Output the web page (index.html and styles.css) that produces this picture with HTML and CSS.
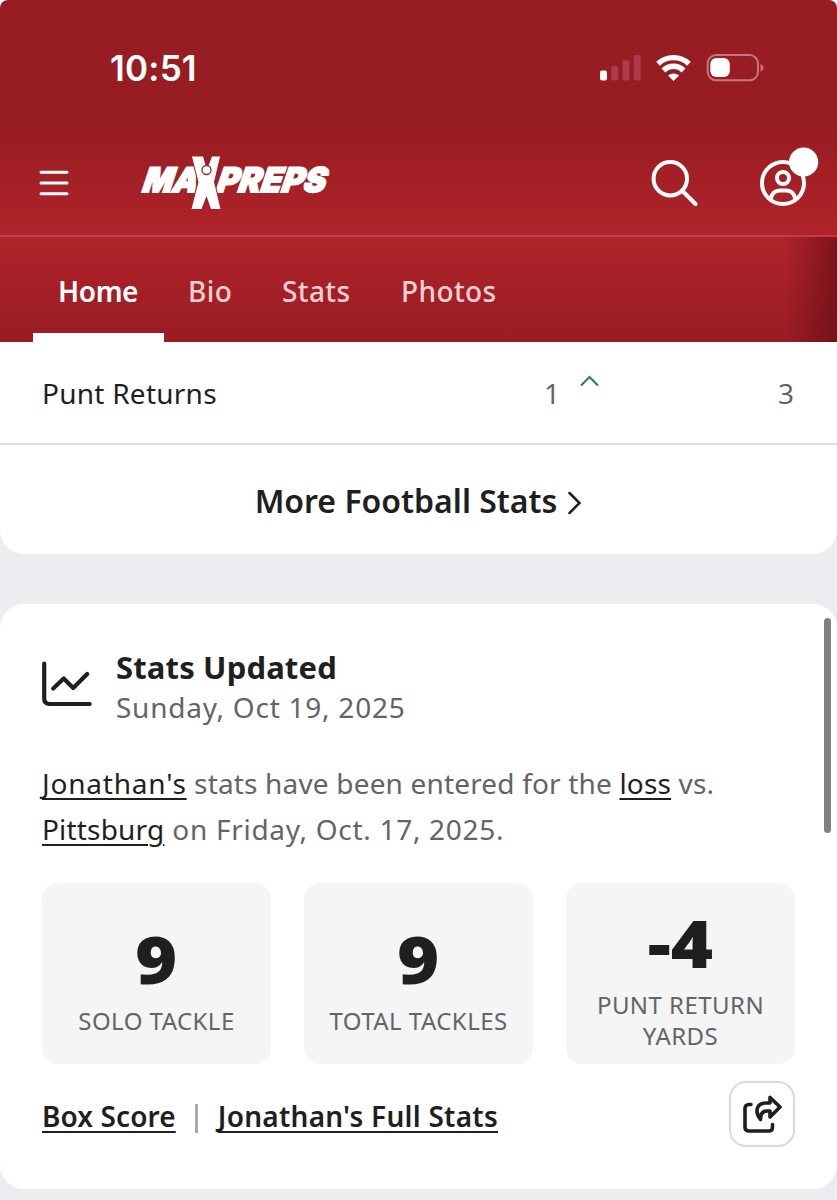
FILE: index.html
```html
<!DOCTYPE html>
<html lang="en">
<head>
    <meta charset="UTF-8">
    <meta name="viewport" content="width=device-width, initial-scale=1.0">
    <title>MaxPreps</title>
    <link rel="stylesheet" href="styles.css">
</head>
<body>
    <header class="top">
        <div class="status-bar">
            <span class="time">10:51</span>
            <svg class="status-icons" width="166" height="30" viewBox="0 0 166 30">
                <!-- signal -->
                <g fill="#fff">
                    <rect x="0" y="17.500" width="7" height="10" rx="2"/>
                    <g fill="#ad3b4c">
                        <rect x="11.300" y="13" width="7" height="14.500" rx="2"/>
                        <rect x="22.500" y="7.300" width="7" height="20.200" rx="2"/>
                        <rect x="33.700" y="2" width="7" height="25.500" rx="2"/>
                    </g>
                </g>
                <!-- wifi -->
                <g fill="none" stroke="#fff" stroke-width="5.400">
                    <path d="M58 10.800a22.500 22.500 0 0 1 31 0"/>
                    <path d="M63.500 17.500a14 14 0 0 1 20 0"/>
                </g>
                <path d="M68 22.500a8.200 8.200 0 0 1 11 0l-5.500 5.500z" fill="#fff"/>
                <!-- battery -->
                <rect x="107.700" y="2" width="50.300" height="25.300" rx="8.500" fill="none" stroke="#cb737d" stroke-width="2"/>
                <rect x="110.300" y="5" width="19.500" height="19" rx="6" fill="#fff"/>
                <path d="M160.500 10.800q3 1.500 3 4t-3 4z" fill="#cb737d"/>
            </svg>
        </div>
        <div class="brand-bar">
            <button class="icon-btn menu" aria-label="Menu">
                <svg width="30" height="26" viewBox="0 0 30 26" stroke="#fff" stroke-width="3" stroke-linecap="round">
                    <path d="M2 2.200h26M2 13h26M2 23.800h26"/>
                </svg>
            </button>
            <svg class="logo" width="200" height="56" viewBox="0 0 200 56" aria-label="MaxPreps">
                <g class="logo-text" transform="translate(0 37.200) skewX(-10)">
                    <text x="1" y="0" textLength="55" lengthAdjust="spacingAndGlyphs">MA</text>
                    <text x="75" y="0" textLength="109" lengthAdjust="spacingAndGlyphs">PREPS</text>
                </g>
                <!-- figure with raised arms -->
                <path d="M51 1.500H62L65 12h2l4-10.500H79L73 27l6.500 27H70L65.500 41 60.500 54H50.500L57.500 27z" fill="#fff" stroke="#a51f26" stroke-width="2" paint-order="stroke"/>
                <circle cx="65.500" cy="15" r="4.500" fill="#fff" stroke="#a32028" stroke-width="1.300"/>
            </svg>
            <svg class="search" width="48" height="48" viewBox="0 0 48 48" fill="none" stroke="#fff" stroke-width="4" stroke-linecap="round">
                <circle cx="20.300" cy="19.700" r="16.700"/>
                <path d="M32.500 32L45.500 45"/>
            </svg>
            <svg class="account" width="60" height="60" viewBox="0 0 60 60">
                <g fill="none" stroke="#fff" stroke-width="4">
                    <circle cx="24" cy="36" r="21"/>
                    <circle cx="24" cy="31" r="6"/>
                    <path d="M11.500 52c1.500-6 5-8.500 9-8.500h7c4 0 7.500 2.500 9 8.500"/>
                </g>
                <circle cx="44.600" cy="15" r="14.600" fill="#fff"/>
            </svg>
        </div>
        <nav class="tabs">
            <a class="tab tab-home active">Home</a>
            <a class="tab tab-bio">Bio</a>
            <a class="tab tab-stats">Stats</a>
            <a class="tab tab-photos">Photos</a>
        </nav>
    </header>

    <main>
        <section class="card card-stats">
            <div class="stat-row">
                <span class="stat-name">Punt Returns</span>
                <span class="stat-value">1</span>
                <svg class="up" width="20" height="12" viewBox="0 0 20 12" fill="none" stroke="#2e7d42" stroke-width="2">
                    <path d="M1 10.500L9.500 2l8.500 8.500"/>
                </svg>
                <span class="stat-rank">3</span>
            </div>
            <a class="more">
                <span class="more-text">More Football Stats</span>
                <svg width="14" height="24" viewBox="0 0 14 24" fill="none" stroke="#1f1f1f" stroke-width="2.500" stroke-linecap="round">
                    <path d="M1.500 2l10 10-10 10"/>
                </svg>
            </a>
        </section>

        <section class="card update">
            <div class="update-head">
                <svg width="52" height="46" viewBox="0 0 52 46" fill="none" stroke="#1f1f1f" stroke-width="4.200" stroke-linecap="round" stroke-linejoin="round">
                    <path d="M2.200 2.500v35q0 5.500 5.500 5.500h40"/>
                    <path d="M11.200 27.500l10.500-10 9.500 9.500 14-14"/>
                </svg>
                <div>
                    <h2 class="update-title">Stats Updated</h2>
                    <p class="update-date">Sunday, Oct 19, 2025</p>
                </div>
            </div>
            <p class="update-text"><a class="player">Jonathan's</a> stats have been entered for the <a>loss</a> vs.<br><a class="opponent">Pittsburg</a><span class="game-date"> on Friday, Oct. 17, 2025.</span></p>
            <div class="boxes">
                <div class="box">
                    <strong>9</strong>
                    <span>SOLO TACKLE</span>
                </div>
                <div class="box">
                    <strong>9</strong>
                    <span>TOTAL TACKLES</span>
                </div>
                <div class="box box-tall">
                    <strong>-4</strong>
                    <span>PUNT RETURN<br>YARDS</span>
                </div>
            </div>
            <div class="actions">
                <a class="link-box">Box Score</a>
                <span class="divider"></span>
                <a class="link-full">Jonathan's Full Stats</a>
                <button class="share" aria-label="Share">
                    <svg width="40" height="40" viewBox="0 0 40 40" fill="none" stroke="#1f1f1f" stroke-width="3.600" stroke-linecap="round" stroke-linejoin="round">
                        <path d="M9 10.500H7q-4 0-4 4V33q0 4 4 4h20q3.500 0 3.500-4v-2.500"/>
                        <path d="M28 3.500v5.500h-4C15 9 12 17 18.500 25.500c0-6 2.500-8.500 6.500-8.500h3v6L38 13z"/>
                    </svg>
                </button>
            </div>
        </section>
    </main>
    <div class="scroll-thumb"></div>
</body>
</html>
```

FILE: styles.css
```css
* {
    box-sizing: border-box;
}
html {
    background: #fff;
}
body {
    margin: 0;
    height: 1200px;
    overflow: hidden;
    color: #1f1f1f;
    font-family: "Noto Sans", sans-serif;
    font-size: 28px;
}
h2, p {
    margin: 0;
}
button {
    padding: 0;
    border: 0;
    background: none;
}
svg {
    display: block;
    flex: none;
}
main {
    height: 858px;
    background: #ecedf1;
}
.top {
    height: 342px;
    border-radius: 8px 8px 0 0;
    background: #981d23;
}
.status-bar {
    display: flex;
    justify-content: space-between;
    height: 130px;
    padding: 53px 71px 0 110px;
}
.time {
    font: 600 35px/30px Inter, sans-serif;
    letter-spacing: 0.2px;
    color: #fff;
}
.brand-bar {
    display: flex;
    align-items: flex-start;
    height: 107px;
    padding: 17px 18px 0 39px;
    background: linear-gradient(#981d23, #b0232a);
    border-bottom: 2px solid #c33b47;
}
.menu {
    margin-top: 23px;
}
.logo {
    margin: 8px 0 0 72px;
    overflow: visible;
}
.logo-text {
    font: italic 900 34px Inter, sans-serif;
    fill: #fff;
    stroke: #fff;
    stroke-width: 1.800px;
}
.search {
    margin: 12px 0 0 auto;
}
.account {
    margin-left: 61px;
}
.tabs {
    display: flex;
    height: 105px;
    padding-left: 33px;
    background:
        linear-gradient(to right, transparent, rgba(100, 10, 20, 0.65)) right / 52px 100% no-repeat,
        linear-gradient(#b0232a, #981d23);
}
.tab {
    display: flex;
    padding: 34px 26px 0;
    line-height: 41px;
    font-weight: 500;
    letter-spacing: 0.4px;
    color: #fbcfd5;
    border-bottom: 9px solid transparent;
}
.tab-home {
    width: 131px;
    padding-left: 25px;
    font-weight: 600;
    letter-spacing: -0.4px;
}
.active {
    color: #fff;
    border-color: #fff;
}
.tab-bio {
    width: 92px;
    padding-left: 24px;
}
.tab-stats {
    width: 119px;
}
.card {
    background: #fff;
    border-radius: 24px;
}
.card-stats {
    height: 212px;
    border-radius: 0 0 24px 24px;
}
.stat-row {
    display: flex;
    height: 103px;
    padding: 32px 43px 0 42px;
    line-height: 38px;
    border-bottom: 2px solid #d9dadd;
}
.stat-name {
    width: 502px;
    letter-spacing: 0.25px;
}
.stat-value, .stat-rank {
    color: #636466;
}
.up {
    margin: 1px 0 0 20px;
}
.stat-rank {
    margin-left: auto;
}
.more {
    display: flex;
    align-items: center;
    justify-content: center;
    gap: 11px;
    height: 110px;
    font-size: 32px;
    font-weight: 600;
}
.more svg {
    margin-top: 5px;
}
.update {
    height: 585px;
    margin-top: 50px;
    padding: 43px 42px 0;
}
.update-head {
    display: flex;
    gap: 22px;
}
.update-head svg {
    margin-top: 14px;
}
.update-title {
    font-size: 31px;
    font-weight: 700;
    line-height: 40px;
    letter-spacing: 0.15px;
}
.update-date {
    color: #636466;
    line-height: 41px;
    letter-spacing: 0.75px;
}
.update-text {
    margin-top: 32px;
    line-height: 46px;
    letter-spacing: 0.17px;
    color: #636466;
    white-space: nowrap;
}
.update-text a {
    color: #1f1f1f;
}
.update-text a, .actions a {
    text-decoration: underline;
    text-decoration-thickness: 2px;
    text-underline-offset: 4px;
    text-decoration-skip-ink: none;
}
.update-text .player {
    letter-spacing: 0.8px;
}
.update-text .opponent {
    text-decoration-skip-ink: auto;
}
.game-date {
    letter-spacing: 0.7px;
}
.boxes {
    display: grid;
    grid-template-columns: repeat(3, 1fr);
    gap: 33px;
    margin-top: 31px;
}
.box {
    display: flex;
    flex-direction: column;
    align-items: center;
    height: 181px;
    padding-top: 40px;
    border-radius: 16px;
    background: #f5f5f5;
}
.box-tall {
    padding-top: 24px;
}
.box strong {
    font-size: 65px;
    font-weight: 900;
    line-height: 72px;
    transform: scaleX(1.11);
}
.box span {
    margin-top: 10px;
    font-size: 24px;
    line-height: 31px;
    letter-spacing: 0.45px;
    text-align: center;
    white-space: nowrap;
    color: #636466;
}
.actions {
    display: flex;
    align-items: center;
    margin-top: 17px;
    height: 66px;
    font-weight: 600;
    white-space: nowrap;
}
.actions a {
    margin-top: 4px;
    letter-spacing: 0.1px;
}
.actions .link-full {
    letter-spacing: 0.25px;
}
.divider {
    width: 3px;
    height: 29px;
    margin: 8px 20px 0 19px;
    background: #a9aaac;
}
.share {
    display: flex;
    align-items: center;
    justify-content: center;
    width: 66px;
    height: 66px;
    margin-left: auto;
    border: 2px solid #d9dadd;
    border-radius: 17px;
}
.scroll-thumb {
    position: fixed;
    top: 618px;
    right: 6px;
    width: 7px;
    height: 215px;
    border-radius: 4px;
    background: #808080;
}
```
